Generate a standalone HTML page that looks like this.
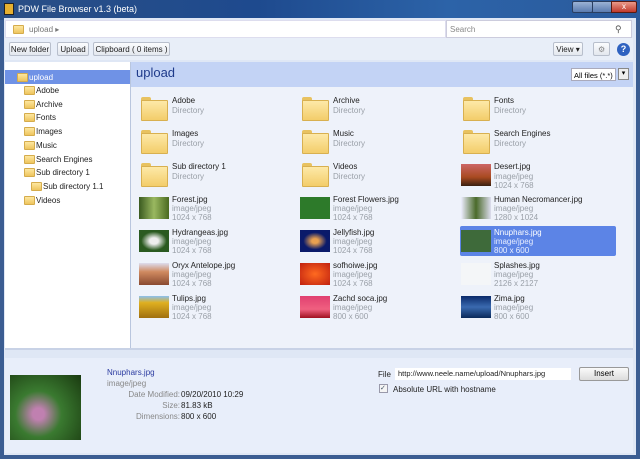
<!DOCTYPE html><html><head><style>
*{margin:0;padding:0;box-sizing:border-box}
body{width:640px;height:459px;overflow:hidden;font-family:"Liberation Sans",sans-serif;font-size:8px;background:#3b5d92;position:relative}
.a{position:absolute}
.fold{position:absolute;width:25px;height:22px}
.fold:before{content:"";position:absolute;left:0;top:0;width:10px;height:5px;background:#e8c260;border-radius:2px 2px 0 0}
.fold:after{content:"";position:absolute;left:0;top:3px;width:25px;height:19px;background:linear-gradient(#fde9a8,#f3cd6a);border:1px solid #d8b050;border-radius:1px}
.sf{position:absolute;width:11px;height:9px;background:linear-gradient(#fde7a0,#eec55e);border:1px solid #d5ac4c;border-radius:1px}
.n{position:absolute;color:#222;font-size:8px;white-space:nowrap}
.g{position:absolute;color:#9aa0a8;font-size:8px;white-space:nowrap}
.btn{position:absolute;top:42px;height:14px;border:1px solid #b8bfcc;background:linear-gradient(#fbfcfe,#e3e7ee);border-radius:2px;font-size:8px;color:#222;padding:2px 0;text-align:center;white-space:nowrap}
.t{position:absolute;left:36px;font-size:8px;color:#222}
.th{position:absolute;width:30px;height:22px}
</style></head><body>
<div class="a" style="left:0;top:0;width:640px;height:20px;background:linear-gradient(90deg,#2a4f86,#1e4a8e 40%,#2c63a8 70%,#2a5a9c)"></div>
<div class="a" style="left:4px;top:3px;width:10px;height:12px;background:#e6b030;border:1px solid #222"></div>
<div class="a" style="left:18px;top:4px;color:#fff;font-size:9px">PDW File Browser v1.3 (beta)</div>
<div class="a" style="left:572px;top:1px;width:21px;height:12px;background:linear-gradient(#9bb3d4,#5a7cb0);border:1px solid #2a3f60;border-radius:2px"></div>
<div class="a" style="left:592px;top:1px;width:20px;height:12px;background:linear-gradient(#9bb3d4,#5a7cb0);border:1px solid #2a3f60"></div>
<div class="a" style="left:611px;top:1px;width:26px;height:12px;background:linear-gradient(#e99a8a,#c0392b);border:1px solid #5a1a10;border-radius:0 2px 2px 0;color:#fff;font-size:8px;text-align:center">x</div>
<div class="a" style="left:4px;top:18px;width:632px;height:437px;background:#dfe7f5"></div>
<div class="a" style="left:5px;top:20px;width:441px;height:18px;background:#fff;border:1px solid #dde"></div>
<div class="sf" style="left:13px;top:25px"></div>
<div class="a" style="left:29px;top:25px;color:#777;font-size:8px">upload &#9656;</div>
<div class="a" style="left:446px;top:20px;width:186px;height:18px;background:#fff;border:1px solid #ccd"></div>
<div class="a" style="left:450px;top:25px;color:#888;font-size:8px">Search</div>
<div class="a" style="left:615px;top:24px;color:#555;font-size:9px">&#9906;</div>
<div class="a" style="left:5px;top:38px;width:628px;height:22px;background:#e8eef8"></div>
<div class="btn" style="left:9px;width:42px">New folder</div>
<div class="btn" style="left:57px;width:32px">Upload</div>
<div class="btn" style="left:93px;width:77px">Clipboard ( 0 items )</div>
<div class="btn" style="left:553px;width:30px">View &#9662;</div>
<div class="btn" style="left:593px;width:17px"></div>
<div class="a" style="left:598px;top:45px;color:#888;font-size:8px">&#9881;</div>
<div class="a" style="left:617px;top:43px;width:13px;height:13px;border-radius:50%;background:#2f62c0;color:#fff;font-size:9px;font-weight:bold;text-align:center;line-height:13px">?</div>
<div class="a" style="left:5px;top:62px;width:125px;height:286px;background:#fff"></div>
<div class="a" style="left:5px;top:70px;width:125px;height:14px;background:#6f92e6"></div>
<div class="sf" style="left:17px;top:73px"></div><div class="t" style="left:29px;top:73px;color:#fff">upload</div>
<div class="sf" style="left:24px;top:86px"></div><div class="t" style="top:86px">Adobe</div>
<div class="sf" style="left:24px;top:100px"></div><div class="t" style="top:100px">Archive</div>
<div class="sf" style="left:24px;top:113px"></div><div class="t" style="top:113px">Fonts</div>
<div class="sf" style="left:24px;top:127px"></div><div class="t" style="top:127px">Images</div>
<div class="sf" style="left:24px;top:141px"></div><div class="t" style="top:141px">Music</div>
<div class="sf" style="left:24px;top:155px"></div><div class="t" style="top:155px">Search Engines</div>
<div class="sf" style="left:24px;top:168px"></div><div class="t" style="top:168px">Sub directory 1</div>
<div class="sf" style="left:31px;top:182px"></div><div class="t" style="left:43px;top:182px">Sub directory 1.1</div>
<div class="sf" style="left:24px;top:196px"></div><div class="t" style="top:196px">Videos</div>
<div class="a" style="left:130px;top:62px;width:503px;height:286px;background:#eef2fa;border-left:1px solid #b9c6de"></div>
<div class="a" style="left:131px;top:62px;width:502px;height:25px;background:#c3d3f5"></div>
<div class="a" style="left:136px;top:65px;color:#1e3a8a;font-size:13px">upload</div>
<div class="a" style="left:571px;top:68px;width:45px;height:13px;background:#fff;border:1px solid #aab;font-size:7.5px;padding:2px 2px">All files (*.*)</div>
<div class="a" style="left:618px;top:68px;width:11px;height:12px;background:#eee;border:1px solid #888;font-size:7px;text-align:center">&#9662;</div>

<div class="fold" style="left:141px;top:97px"></div><div class="n" style="left:172px;top:96px">Adobe</div><div class="g" style="left:172px;top:106px">Directory</div>
<div class="fold" style="left:302px;top:97px"></div><div class="n" style="left:333px;top:96px">Archive</div><div class="g" style="left:333px;top:106px">Directory</div>
<div class="fold" style="left:463px;top:97px"></div><div class="n" style="left:494px;top:96px">Fonts</div><div class="g" style="left:494px;top:106px">Directory</div>
<div class="fold" style="left:141px;top:130px"></div><div class="n" style="left:172px;top:129px">Images</div><div class="g" style="left:172px;top:139px">Directory</div>
<div class="fold" style="left:302px;top:130px"></div><div class="n" style="left:333px;top:129px">Music</div><div class="g" style="left:333px;top:139px">Directory</div>
<div class="fold" style="left:463px;top:130px"></div><div class="n" style="left:494px;top:129px">Search Engines</div><div class="g" style="left:494px;top:139px">Directory</div>
<div class="fold" style="left:141px;top:163px"></div><div class="n" style="left:172px;top:162px">Sub directory 1</div><div class="g" style="left:172px;top:172px">Directory</div>
<div class="fold" style="left:302px;top:163px"></div><div class="n" style="left:333px;top:162px">Videos</div><div class="g" style="left:333px;top:172px">Directory</div>
<div class="th" style="left:461px;top:164px;background:linear-gradient(#c66 ,#a84a20 60%,#3a2010)"></div><div class="n" style="left:494px;top:162px">Desert.jpg</div><div class="g" style="left:494px;top:172px">image/jpeg</div><div class="g" style="left:494px;top:181px">1024 x 768</div>

<div class="a" style="left:460px;top:226px;width:156px;height:30px;background:#5c84e6;border-radius:2px"></div>

<div class="th" style="left:139px;top:197px;background:linear-gradient(90deg,#3a5a20,#9ab860,#4a6a20)"></div><div class="n" style="left:172px;top:195px">Forest.jpg</div><div class="g" style="left:172px;top:204px">image/jpeg</div><div class="g" style="left:172px;top:213px">1024 x 768</div>
<div class="th" style="left:300px;top:197px;background:#2d7a2a"></div><div class="n" style="left:333px;top:195px">Forest Flowers.jpg</div><div class="g" style="left:333px;top:204px">image/jpeg</div><div class="g" style="left:333px;top:213px">1024 x 768</div>
<div class="th" style="left:461px;top:197px;background:linear-gradient(90deg,#eef,#4a6a2a,#dde)"></div><div class="n" style="left:494px;top:195px">Human Necromancer.jpg</div><div class="g" style="left:494px;top:204px">image/jpeg</div><div class="g" style="left:494px;top:213px">1280 x 1024</div>

<div class="th" style="left:139px;top:230px;background:radial-gradient(#eee 20%,#2a5a20 60%)"></div><div class="n" style="left:172px;top:228px">Hydrangeas.jpg</div><div class="g" style="left:172px;top:237px">image/jpeg</div><div class="g" style="left:172px;top:246px">1024 x 768</div>
<div class="th" style="left:300px;top:230px;background:radial-gradient(#e8a050 15%,#0a1a6a 55%)"></div><div class="n" style="left:333px;top:228px">Jellyfish.jpg</div><div class="g" style="left:333px;top:237px">image/jpeg</div><div class="g" style="left:333px;top:246px">1024 x 768</div>
<div class="th" style="left:461px;top:230px;background:#3e6a3a"></div><div class="n" style="left:494px;top:228px;color:#fff">Nnuphars.jpg</div><div class="g" style="left:494px;top:237px;color:#e8eeff">image/jpeg</div><div class="g" style="left:494px;top:246px;color:#e8eeff">800 x 600</div>

<div class="th" style="left:139px;top:263px;background:linear-gradient(#dde,#d08a60 40%,#8a4a30)"></div><div class="n" style="left:172px;top:261px">Oryx Antelope.jpg</div><div class="g" style="left:172px;top:270px">image/jpeg</div><div class="g" style="left:172px;top:279px">1024 x 768</div>
<div class="th" style="left:300px;top:263px;background:radial-gradient(#ff6a20,#c02010)"></div><div class="n" style="left:333px;top:261px">sofhoiwe.jpg</div><div class="g" style="left:333px;top:270px">image/jpeg</div><div class="g" style="left:333px;top:279px">1024 x 768</div>
<div class="th" style="left:461px;top:263px;background:#f4f6f8"></div><div class="n" style="left:494px;top:261px">Splashes.jpg</div><div class="g" style="left:494px;top:270px">image/jpeg</div><div class="g" style="left:494px;top:279px">2126 x 2127</div>

<div class="th" style="left:139px;top:296px;background:linear-gradient(#8ac0f0,#e0b020 30%,#a07010)"></div><div class="n" style="left:172px;top:294px">Tulips.jpg</div><div class="g" style="left:172px;top:303px">image/jpeg</div><div class="g" style="left:172px;top:312px">1024 x 768</div>
<div class="th" style="left:300px;top:296px;background:linear-gradient(#e04070,#f06080 60%,#a01020)"></div><div class="n" style="left:333px;top:294px">Zachd soca.jpg</div><div class="g" style="left:333px;top:303px">image/jpeg</div><div class="g" style="left:333px;top:312px">800 x 600</div>
<div class="th" style="left:461px;top:296px;background:linear-gradient(#0a2a6a,#3a6ab0 50%,#0a2a5a)"></div><div class="n" style="left:494px;top:294px">Zima.jpg</div><div class="g" style="left:494px;top:303px">image/jpeg</div><div class="g" style="left:494px;top:312px">800 x 600</div>

<div class="a" style="left:5px;top:348px;width:628px;height:2px;background:#c8d2e6"></div>
<div class="a" style="left:5px;top:358px;width:628px;height:95px;background:#e8eefa"></div>
<div class="a" style="left:10px;top:375px;width:71px;height:65px;background:radial-gradient(circle at 40% 60%,#c080b0 10%,#3a7a30 40%,#1a3a10)"></div>
<div class="a" style="left:107px;top:368px;color:#2a3aa0;font-size:8px">Nnuphars.jpg</div>
<div class="a" style="left:107px;top:379px;color:#888;font-size:8px">image/jpeg</div>
<div class="a" style="left:80px;top:390px;width:100px;text-align:right;color:#888">Date Modified:</div><div class="a" style="left:181px;top:390px;color:#222">09/20/2010 10:29</div>
<div class="a" style="left:80px;top:401px;width:100px;text-align:right;color:#888">Size:</div><div class="a" style="left:181px;top:401px;color:#222">81.83 kB</div>
<div class="a" style="left:80px;top:412px;width:100px;text-align:right;color:#888">Dimensions:</div><div class="a" style="left:181px;top:412px;color:#222">800 x 600</div>
<div class="a" style="left:378px;top:370px;color:#222">File</div>
<div class="a" style="left:395px;top:368px;width:176px;height:12px;background:#fff;font-size:7.5px;padding:1px 3px;color:#222">http://www.neele.name/upload/Nnuphars.jpg</div>
<div class="a" style="left:579px;top:367px;width:50px;height:14px;border:1px solid #999;border-radius:2px;background:linear-gradient(#fafafa,#dcdcdc);text-align:center;line-height:12px">Insert</div>
<div class="a" style="left:379px;top:384px;width:9px;height:9px;border:1px solid #99a;background:#f4f4f4;font-size:7px;line-height:7px;color:#456">&#10003;</div>
<div class="a" style="left:393px;top:385px;color:#222">Absolute URL with hostname</div>
</body></html>
